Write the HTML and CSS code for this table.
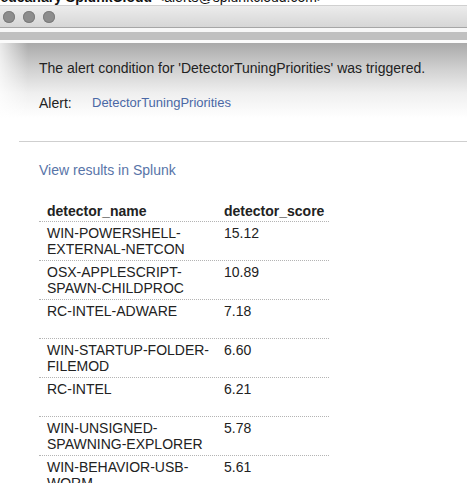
FILE: index.html
```html
<!DOCTYPE html>
<html>
<head>
<meta charset="utf-8">
<link rel="stylesheet" href="styles.css">
</head>
<body>
<div class="sender"><div class="sender-text"><b>redcanary SplunkCloud</b> &lt;alerts@splunkcloud.com&gt;</div></div>
<div class="titlebar">
  <span class="dot"></span><span class="dot"></span><span class="dot"></span>
</div>
<div class="strip-white"></div>
<div class="strip-gray"></div>
<div class="strip-white2"></div>
<div class="content">
  <div class="inner">
    <p class="lead">The alert condition for 'DetectorTuningPriorities' was triggered.</p>
    <div class="alert-row"><span class="label">Alert:</span><a class="alert-link">DetectorTuningPriorities</a></div>
  </div>
  <div class="rule"></div>
  <div class="inner">
    <a class="view-link">View results in Splunk</a>
    <div class="results">
      <div class="row head"><div class="cell">detector_name</div><div class="cell">detector_score</div></div>
      <div class="row"><div class="cell">WIN-POWERSHELL-<br>EXTERNAL-NETCON</div><div class="cell">15.12</div></div>
      <div class="row"><div class="cell">OSX-APPLESCRIPT-<br>SPAWN-CHILDPROC</div><div class="cell">10.89</div></div>
      <div class="row"><div class="cell">RC-INTEL-ADWARE</div><div class="cell">7.18</div></div>
      <div class="row"><div class="cell">WIN-STARTUP-FOLDER-<br>FILEMOD</div><div class="cell">6.60</div></div>
      <div class="row"><div class="cell">RC-INTEL</div><div class="cell">6.21</div></div>
      <div class="row"><div class="cell">WIN-UNSIGNED-<br>SPAWNING-EXPLORER</div><div class="cell">5.78</div></div>
      <div class="row"><div class="cell">WIN-BEHAVIOR-USB-<br>WORM</div><div class="cell">5.61</div></div>
    </div>
  </div>
</div>
</body>
</html>
```
FILE: styles.css
```css
html, body {
  margin: 0;
  padding: 0;
  background: #fff;
}
body {
  font-family: "Liberation Sans", Arial, Helvetica, sans-serif;
  color: #222;
  width: 467px;
  height: 483px;
  overflow: hidden;
}
.sender {
  height: 5px;
  overflow: hidden;
  background: #fff;
}
.sender-text {
  margin-top: -10px;
  margin-left: -5px;
  font-size: 14px;
  line-height: 14px;
  color: #111;
  white-space: nowrap;
}
.titlebar {
  height: 21px;
  background: linear-gradient(to bottom, #ececec, #d6d6d6);
  border-top: 1px solid #d0d0d0;
  border-bottom: 1px solid #a6a6a6;
  display: flex;
  align-items: center;
  gap: 8px;
  padding-left: 3px;
  box-sizing: content-box;
}
.dot {
  width: 12px;
  height: 12px;
  border-radius: 50%;
  background: #8d8d8d;
  box-shadow: inset 0 0 0 1px #7d7d7d;
}
.strip-white {
  height: 4px;
  background: #f7f7f7;
}
.strip-gray {
  height: 8px;
  background: #c0c0c0;
}
.strip-white2 {
  height: 3px;
  background: #fbfbfb;
}
.content {
  padding-top: 17px;
  background:
    linear-gradient(to right, rgba(255,255,255,0.75), rgba(255,255,255,0) 28px),
    linear-gradient(to bottom, #a9a9a9 0, #cfcfcf 25px, #efefef 50px, #fff 75px);
}
.inner {
  padding-left: 39px;
}
.lead {
  margin: 0;
  font-size: 14px;
  line-height: 16px;
  color: #222;
}
.alert-row {
  margin-top: 19px;
  display: flex;
  font-size: 14px;
  line-height: 16px;
}
.label {
  width: 53px;
  color: #222;
}
.alert-link {
  color: #4a68a6;
  font-size: 13px;
}
.rule {
  margin: 30px 0 0 19px;
  height: 1px;
  background: #cfcfcf;
}
.view-link {
  display: block;
  margin-top: 20px;
  font-size: 14px;
  line-height: 16px;
  color: #5874a8;
}
.results {
  margin-top: 25px;
  width: 290px;
  font-size: 14px;
  line-height: 16px;
  color: #222;
}
.row {
  display: grid;
  grid-template-columns: 177px 113px;
  height: 39px;
  box-sizing: border-box;
  border-top: 1px dotted #b4b4b4;
  padding-top: 3px;
}
.row.head {
  height: auto;
  border-top: none;
  padding-top: 0;
  padding-bottom: 2px;
  border-bottom: 1px dotted #b4b4b4;
  font-weight: bold;
}
.row.head + .row {
  border-top: none;
  height: 38px;
}
.cell {
  padding: 0 8px;
  white-space: nowrap;
}
```
